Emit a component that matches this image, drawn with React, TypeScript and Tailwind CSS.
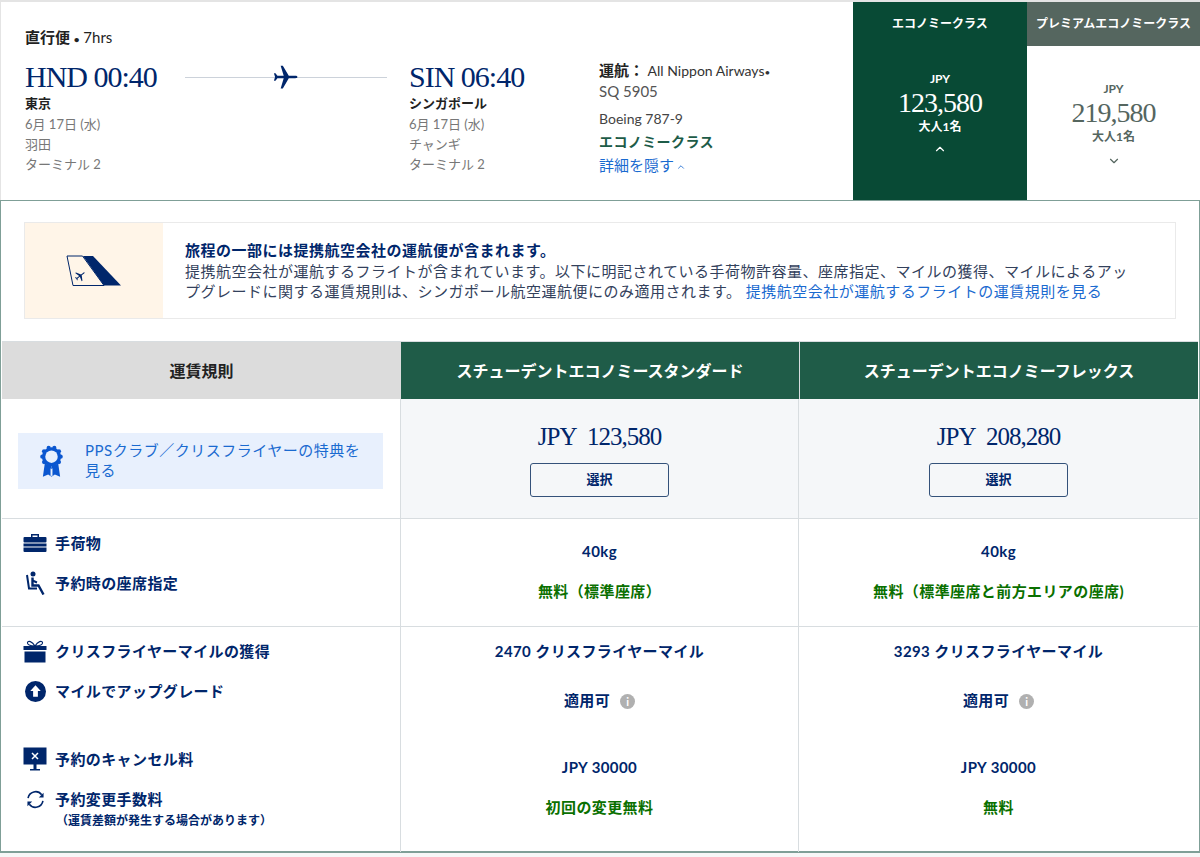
import { ChevronUp, ChevronDown } from 'lucide-react';

const sans = "font-['Lato','Noto_Sans_CJK_JP',sans-serif]";
const serif = "font-['Liberation_Serif','Noto_Sans_CJK_JP',serif]";

const scallops = [0, 1, 2, 3, 4, 5, 6, 7, 8, 9];

function PlaneIcon({ className }: { className: string }) {
  return (
    <svg viewBox="0 0 24 24" className={className} fill="currentColor">
      <path d="M23.500 12c0-.7-1-1.100-2-1.100h-6L10 1.500H8l2.800 9.400H5L3.200 8.500H1.800L2.800 12 1.800 15.500H3.200L5 13.100h5.800L8 22.500h2l5.500-9.400h6c1 0 2-.4 2-1.100z" />
    </svg>
  );
}

function TailIcon() {
  return (
    <svg viewBox="0 0 56 32" className="w-[56px] h-[32px] shrink-0">
      <path d="M1 1h15.500L38 30.500H7z" fill="none" stroke="#00266b" strokeWidth="1" />
      <path d="M17 1h10l28 29.500H38z" fill="#00266b" />
      <g transform="translate(14 21) rotate(-38) scale(0.5)" fill="#00266b">
        <path d="M11.500 0c0-.7-1-1.100-2-1.100h-6L-2-10.500h-2l2.800 9.400H-7L-8.800-3.500h-1.400L-9.200 0l-1 3.500h1.400L-7 1.100h5.800L-4 10.500h2L3.500 1.100h6c1 0 2-.4 2-1.100z" />
      </g>
    </svg>
  );
}

function RibbonIcon() {
  return (
    <svg viewBox="0 0 24 34" className="w-[23px] h-[33px] shrink-0" fill="#0b57d0">
      <path d="M5 19l-2 14 5.500-2.500L12 33V22z" />
      <path d="M19 19l2 14-5.500-2.500L12 33V22z" />
      <path d="M11 24l1 1 1-1v9l-1-1.500-1 1.500z" fill="#e8f0fd" />
      <circle cx="12" cy="12" r="10" />
      {scallops.map((i) => (
        <circle key={i} cx={12 + 9.6 * Math.cos((i * Math.PI) / 5)} cy={12 + 9.6 * Math.sin((i * Math.PI) / 5)} r="2.200" />
      ))}
      <circle cx="12" cy="12" r="6.500" fill="#e8f0fd" />
    </svg>
  );
}

function BagIcon() {
  return (
    <svg viewBox="0 0 24 20" className="w-[24px] h-[20px]" fill="#00266b">
      <path d="M8 4V1h8v3h-1.500V2.500h-5V4z" />
      <rect x="0.500" y="4" width="23" height="5.500" rx="1" />
      <rect x="0.500" y="10.500" width="23" height="3" />
      <path d="M.5 14.500h23V18a1 1 0 0 1-1 1h-21a1 1 0 0 1-1-1z" />
    </svg>
  );
}

function SeatIcon() {
  return (
    <svg viewBox="0 0 20 24" className="w-[20px] h-[24px]" fill="none" stroke="#00266b">
      <circle cx="8" cy="3" r="2.500" fill="#00266b" stroke="none" />
      <path d="M7.500 6.500v8h6l5 9" strokeWidth="2.400" />
      <path d="M2 4l2 13.500h8" strokeWidth="2" />
      <path d="M7.500 9.500l4.500 2" strokeWidth="2" />
    </svg>
  );
}

function GiftIcon() {
  return (
    <svg viewBox="0 0 24 23" className="w-[24px] h-[23px]" fill="#00266b">
      <path d="M12 6C9 1 5 .500 4.500 2.500S7 6 12 6c5 0 8-1.500 7.500-3.500S15 1 12 6z" fill="none" stroke="#00266b" strokeWidth="1.200" />
      <rect x="0.500" y="6" width="23" height="4" />
      <rect x="1.500" y="11.500" width="21" height="11" />
    </svg>
  );
}

function UpIcon() {
  return (
    <svg viewBox="0 0 22 22" className="w-[21px] h-[21px]">
      <circle cx="11" cy="11" r="11" fill="#00266b" />
      <path d="M11 4.500l5.500 6h-3v6h-5v-6h-3z" fill="#fff" />
    </svg>
  );
}

function CancelIcon() {
  return (
    <svg viewBox="0 0 24 24" className="w-[24px] h-[24px]" fill="#00266b">
      <rect x="0.500" y="0.500" width="23" height="17" />
      <rect x="10.500" y="17" width="3" height="5" />
      <rect x="7" y="22" width="10" height="1.500" />
      <path d="M9 6l6 6M15 6l-6 6" stroke="#fff" strokeWidth="1.500" />
    </svg>
  );
}

function ChangeIcon() {
  return (
    <svg viewBox="0 0 20 20" className="w-[19px] h-[19px]" fill="none" stroke="#00266b" strokeWidth="1.700">
      <path d="M2.200 8.500A8 8 0 0 1 16.500 5" />
      <path d="M17.800 11.500A8 8 0 0 1 3.500 15" />
      <path d="M18.500 3v5h-5z" fill="#00266b" stroke="none" />
      <path d="M1.500 17v-5h5z" fill="#00266b" stroke="none" />
    </svg>
  );
}

function InfoDot() {
  return (
    <span className="w-[15px] h-[15px] rounded-full bg-[#b0b0b0] text-white text-[11px] font-bold leading-[15px] text-center tracking-normal mt-[2px]">i</span>
  );
}

function RuleLabel({ icon, label }: { icon: React.ReactNode; label: string }) {
  return (
    <div className="flex items-center h-[24px]">
      <div className="w-[24px] flex justify-center shrink-0">{icon}</div>
      <span className="ml-[8px] text-[15px] tracking-[0.4px] font-bold text-[#00266b] leading-[20px] whitespace-nowrap">{label}</span>
    </div>
  );
}

function Route({ time, city, airport }: { time: string; city: string; airport: string }) {
  return (
    <div>
      <div className={`${serif} text-[30px] tracking-[-1px] leading-[32px] text-[#00266b] whitespace-nowrap`}>{time}</div>
      <div className="mt-[1px] text-[13px] font-bold leading-[18px] text-[#222]">{city}</div>
      <div className="mt-[2px] text-[13px] leading-[20px] text-[#777]">
        <div>6月 17日 (水)</div>
        <div>{airport}</div>
        <div>ターミナル 2</div>
      </div>
    </div>
  );
}

function FareValue({ children, green }: { children: React.ReactNode; green?: boolean }) {
  return (
    <div className={`h-[40px] flex items-center justify-center gap-[10px] text-[15px] tracking-[0.4px] font-bold ${green ? 'text-[#0a7000]' : 'text-[#00266b]'}`}>
      {children}
    </div>
  );
}

function FareColumn({ price, miles, seat, change }: { price: string; miles: string; seat: string; change: string }) {
  return (
    <>
      <div className="h-[120px] bg-[#f5f7f9] border-b border-[#d8dde0] flex flex-col items-center pt-[22px]">
        <div className={`${serif} text-[25px] tracking-[-1px] leading-[32px] text-[#00266b]`}>JPY&nbsp; {price}</div>
        <button className="mt-[10px] w-[139px] h-[34px] rounded-[3px] border border-[#34527a] bg-transparent text-[13px] font-bold text-[#00266b]">選択</button>
      </div>
      <div className="h-[108px] border-b border-[#d8dde0] pt-[12px]">
        <FareValue>40kg</FareValue>
        <FareValue green>{seat}</FareValue>
      </div>
      <div className="h-[225px] pt-[4px]">
        <FareValue>{miles}</FareValue>
        <div className="h-[9px]" />
        <FareValue>適用可 <InfoDot /></FareValue>
        <div className="h-[27px]" />
        <FareValue>JPY 30000</FareValue>
        <FareValue green>{change}</FareValue>
      </div>
    </>
  );
}

export default function App() {
  return (
    <div className={`${sans} w-[1200px] h-[857px] bg-[#f7f7f7] overflow-hidden`}>
      {/* Flight summary */}
      <div className="h-[200px] flex bg-white border-t-2 border-[#e4e4e4]">
        <div className="w-[853px] flex pl-[24px] border-l border-[#e4e4e4]">
          <div className="w-[574px] pt-[25px]">
            <div className="text-[15px] leading-[20px] text-[#222]"><b>直行便 <span className="text-[10px]">•</span></b> 7hrs</div>
            <div className="flex mt-[12px]">
              <div className="w-[160px]">
                <Route time="HND 00:40" city="東京" airport="羽田" />
              </div>
              <div className="w-[202px] h-[32px] relative flex items-center justify-center">
                <div className="w-full h-px bg-[#ccd2da]" />
                <PlaneIcon className="absolute left-[87px] top-[3px] w-[26px] h-[26px] text-[#00266b]" />
              </div>
              <div className="ml-[22px]">
                <Route time="SIN 06:40" city="シンガポール" airport="チャンギ" />
              </div>
            </div>
          </div>
          <div className="pt-[57px] text-[15px] text-[#333]">
            <div className="leading-[22px] text-[14px] w-[200px] whitespace-nowrap"><b className="text-[15px] text-[#222]">運航：</b> All Nippon Airways<span className="text-[10px]">•</span></div>
            <div className="leading-[16px] text-[#555]">SQ 5905</div>
            <div className="mt-[10px] leading-[20px] text-[14px] text-[#444]">Boeing 787-9</div>
            <div className="mt-[2px] leading-[22px] text-[14px] tracking-[0.4px] font-bold text-[#1d5c48]">エコノミークラス</div>
            <div className="mt-[1px] leading-[22px] text-[15px] text-[#1a6ad0] flex items-center">詳細を隠す<ChevronUp className="w-[10px] h-[10px] ml-[2px] mt-[3px]" /></div>
          </div>
        </div>
        <div className="w-[174px] bg-[#084a35] text-white flex flex-col items-center">
          <div className="h-[44px] flex items-center text-[12px] font-bold">エコノミークラス</div>
          <div className="mt-[24px] text-[12px] font-bold leading-[18px]">JPY</div>
          <div className={`${serif} text-[28px] tracking-[-1px] leading-[30px]`}>123,580</div>
          <div className="text-[12px] font-bold leading-[18px]">大人1名</div>
          <ChevronUp className="w-[14px] h-[14px] mt-[6px]" />
        </div>
        <div className="w-[173px] text-[#55665f] flex flex-col items-center">
          <div className="w-full h-[44px] bg-[#55665f] text-white flex items-center justify-center text-[12px] font-bold whitespace-nowrap">プレミアムエコノミークラス</div>
          <div className="mt-[34px] text-[12px] font-bold leading-[18px]">JPY</div>
          <div className={`${serif} text-[28px] tracking-[-1px] leading-[30px]`}>219,580</div>
          <div className="text-[12px] font-bold leading-[18px]">大人1名</div>
          <ChevronDown className="w-[14px] h-[14px] mt-[8px]" />
        </div>
      </div>

      {/* Details panel */}
      <div className="h-[653px] bg-white border border-[#7f9f97] border-b-2 pt-[21px]">
        <div className="mx-[23px] h-[97px] flex border border-[#eaeaea]">
          <div className="w-[138px] shrink-0 bg-[#fff5e8] flex items-center justify-center">
            <TailIcon />
          </div>
          <div className="pl-[22px] pr-[40px] pt-[17px] text-[15px] tracking-[0.5px] leading-[20px] text-[#33415c]">
            <div className="font-bold text-[#00266b] leading-[20px]">旅程の一部には提携航空会社の運航便が含まれます。</div>
            <div className="mt-px">提携航空会社が運航するフライトが含まれています。以下に明記されている手荷物許容量、座席指定、マイルの獲得、マイルによるアップグレードに関する運賃規則は、シンガポール航空運航便にのみ適用されます。 <span className="text-[#1a6ad0]">提携航空会社が運航するフライトの運賃規則を見る</span></div>
          </div>
        </div>

        <div className="mt-[22px] mx-px grid grid-cols-[399px_398px_399px] border-t border-[#d8dde0]">
          <div className="h-[57px] bg-[#dcdcdc] flex items-center justify-center text-[16px] font-bold text-[#222]">運賃規則</div>
          <div className="h-[57px] bg-[#1f5c48] flex items-center justify-center text-[16px] font-bold text-white">スチューデントエコノミースタンダード</div>
          <div className="h-[57px] bg-[#1f5c48] border-l border-[#d8dde0] flex items-center justify-center text-[16px] font-bold text-white">スチューデントエコノミーフレックス</div>

          <div className="row-span-3 border-r border-[#d8dde0] flex flex-col">
            <div className="h-[120px] border-b border-[#d8dde0] pt-[34px] pl-[16px] pr-[17px]">
              <div className="h-[56px] bg-[#e8f0fd] flex items-center pl-[22px] pr-[20px]">
                <RibbonIcon />
                <span className="ml-[22px] -mt-[2px] text-[15px] tracking-[0.5px] leading-[20px] text-[#1a6ad0]">PPSクラブ／クリスフライヤーの特典を見る</span>
              </div>
            </div>
            <div className="h-[108px] border-b border-[#d8dde0] pl-[21px] pt-[12px] flex flex-col gap-[16px]">
              <RuleLabel icon={<BagIcon />} label="手荷物" />
              <RuleLabel icon={<SeatIcon />} label="予約時の座席指定" />
            </div>
            <div className="h-[225px] pl-[21px] pt-[12px]">
              <RuleLabel icon={<GiftIcon />} label="クリスフライヤーマイルの獲得" />
              <div className="mt-[16px]"><RuleLabel icon={<UpIcon />} label="マイルでアップグレード" /></div>
              <div className="mt-[44px]"><RuleLabel icon={<CancelIcon />} label="予約のキャンセル料" /></div>
              <div className="mt-[16px]"><RuleLabel icon={<ChangeIcon />} label="予約変更手数料" /></div>
              <div className="ml-[33px] mt-[2px] text-[12px] font-bold text-[#00266b] leading-[16px]">（運賃差額が発生する場合があります）</div>
            </div>
          </div>
          <div className="row-span-3 border-r border-[#d8dde0]">
            <FareColumn price="123,580" miles="2470 クリスフライヤーマイル" seat="無料（標準座席）" change="初回の変更無料" />
          </div>
          <div className="row-span-3">
            <FareColumn price="208,280" miles="3293 クリスフライヤーマイル" seat="無料（標準座席と前方エリアの座席)" change="無料" />
          </div>
        </div>
      </div>
    </div>
  );
}
